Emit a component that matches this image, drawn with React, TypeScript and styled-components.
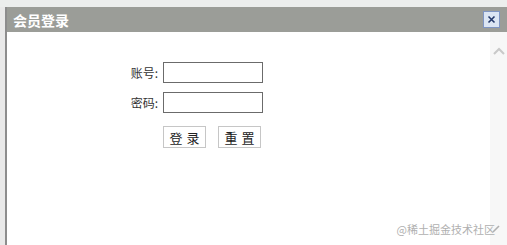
import React from "react";
import styled, { createGlobalStyle } from "styled-components";

const Global = createGlobalStyle`
  html, body { margin: 0; padding: 0; background: #ececec; }
  body { font-family: "Noto Sans CJK SC", "Liberation Sans", sans-serif; }
`;

const Page = styled.div`
  width: 507px;
  height: 245px;
  display: flex;
  flex-direction: column;
  background: #eceeed;
  position: relative;
  overflow: hidden;
`;

const TopStrip = styled.div`
  height: 7px;
  background: #eceeed;
`;

const Main = styled.div`
  flex: 1;
  display: flex;
`;

const LeftStrip = styled.div`
  width: 5px;
  background: #e9e9e9;
  border-right: 2px solid #8d8d8d;
`;

const Dialog = styled.div`
  flex: 1;
  display: flex;
  flex-direction: column;
  background: #fff;
`;

const TitleBar = styled.div`
  height: 25px;
  background: #9b9d98;
  display: flex;
  align-items: center;
  justify-content: space-between;
  padding: 0 7px 0 6px;
`;

const Title = styled.span`
  color: #fff;
  font-weight: bold;
  font-size: 14px;
  font-family: "Noto Sans CJK SC", sans-serif;
`;

const CloseBtn = styled.div`
  width: 15px;
  height: 15px;
  background: #dbe5f3;
  border: 1px solid #7f95c2;
  display: flex;
  align-items: center;
  justify-content: center;
`;

const Body = styled.div`
  flex: 1;
  display: flex;
`;

const Content = styled.div`
  flex: 1;
  display: flex;
  flex-direction: column;
  padding: 30px 0 0 115px;
`;

const Scrollbar = styled.div`
  width: 17px;
  background: #f7f7f7;
  display: flex;
  justify-content: center;
  padding-top: 15px;
`;

const Row = styled.div`
  display: flex;
  align-items: center;
  height: 21px;
  margin-bottom: 9px;
`;

const Label = styled.label`
  width: 41px;
  box-sizing: border-box;
  padding-right: 5px;
  text-align: right;
  font-size: 12px;
  color: #333;
  font-family: "Noto Sans CJK SC", sans-serif;
`;

const Input = styled.input`
  width: 96px;
  height: 17px;
  border: 1px solid #6b6b6b;
  padding: 1px;
  margin: 0;
  outline: none;
`;

const Buttons = styled.div`
  display: flex;
  gap: 12px;
  margin-left: 41px;
  margin-top: 4px;
`;

const Button = styled.button`
  width: 43px;
  height: 22px;
  background: #fff;
  border: 1px solid #c6c6c6;
  font-size: 13px;
  font-family: "Noto Sans CJK SC", sans-serif;
  color: #222;
  letter-spacing: 4px;
  padding: 0 0 0 4px;
  margin: 0;
`;

const Watermark = styled.div`
  position: absolute;
  right: 7px;
  bottom: 8px;
  display: flex;
  align-items: center;
  font-size: 11px;
  color: #b0b0b0;
  font-family: "Noto Sans CJK SC", sans-serif;
`;

const Check = styled.svg`
  margin-left: -3px;
`;

export default function App() {
  return (
    <>
      <Global />
      <Page>
        <TopStrip />
        <Main>
          <LeftStrip />
          <Dialog>
            <TitleBar>
              <Title>会员登录</Title>
              <CloseBtn>
                <svg width="9" height="9" viewBox="0 0 9 9">
                  <path d="M1.5 1.5 L7.5 7.5 M7.5 1.5 L1.5 7.5" stroke="#24396a" strokeWidth="1.6" />
                </svg>
              </CloseBtn>
            </TitleBar>
            <Body>
              <Content>
                <Row>
                  <Label>账号:</Label>
                  <Input />
                </Row>
                <Row>
                  <Label>密码:</Label>
                  <Input type="password" />
                </Row>
                <Buttons>
                  <Button>登录</Button>
                  <Button>重置</Button>
                </Buttons>
              </Content>
              <Scrollbar>
                <svg width="12" height="8" viewBox="0 0 12 8">
                  <path d="M1 7 L6 2 L11 7" stroke="#c9c9c9" strokeWidth="2" fill="none" />
                </svg>
              </Scrollbar>
            </Body>
          </Dialog>
        </Main>
        <Watermark>
          @稀土掘金技术社区
          <Check width="8" height="8" viewBox="0 0 8 8">
            <path d="M1 7 L7 1" stroke="#b0b0b0" strokeWidth="1.6" />
          </Check>
        </Watermark>
      </Page>
    </>
  );
}
